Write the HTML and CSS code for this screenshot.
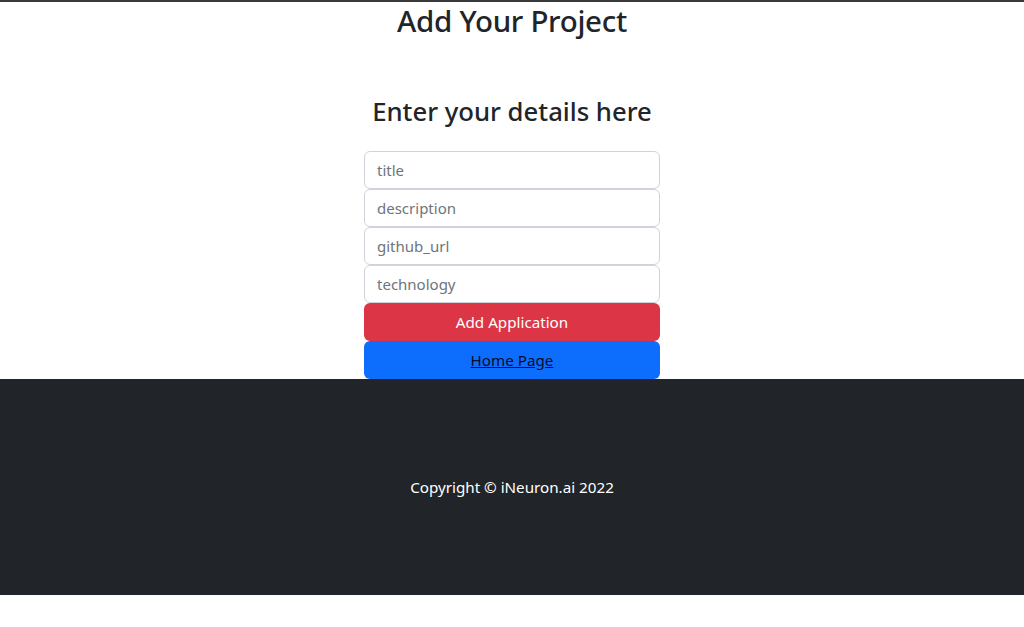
FILE: index.html
```html
<!DOCTYPE html>
<html lang="en">
<head>
<meta charset="utf-8">
<title>Add Your Project</title>
<link rel="stylesheet" href="styles.css">
</head>
<body>
<header class="topbar">
  <h1 class="page-title">Add Your Project</h1>
</header>
<main class="content">
  <h2 class="form-title">Enter your details here</h2>
  <form class="project-form">
    <input class="field" type="text" placeholder="title">
    <input class="field" type="text" placeholder="description">
    <input class="field" type="text" placeholder="github_url">
    <input class="field" type="text" placeholder="technology">
    <button class="btn btn-danger" type="button">Add Application</button>
    <div class="btn btn-primary"><a class="home-link" href="#">Home Page</a></div>
  </form>
</main>
<footer class="footer">
  <p class="copyright">Copyright © iNeuron.ai 2022</p>
</footer>
</body>
</html>
```
FILE: styles.css
```css
* { box-sizing: border-box; }
html, body { margin: 0; padding: 0; background: #fff; }
body {
  font-family: "Noto Sans", "Open Sans", sans-serif;
  color: #212529;
  border-top: 2px solid #3a3a3a;
}
.topbar { text-align: center; }
.page-title {
  margin: 0;
  font-size: 29.5px;
  font-weight: 500;
  line-height: 38px;
  letter-spacing: -0.3px;
}
.content {
  display: flex;
  flex-direction: column;
  align-items: center;
  padding-top: 55px;
}
.form-title {
  margin: 0 0 22px;
  font-size: 25.7px;
  font-weight: 500;
  line-height: 34px;
}
.project-form {
  width: 296px;
  display: flex;
  flex-direction: column;
}
.field {
  height: 38px;
  width: 100%;
  border: 1px solid #ced4da;
  border-radius: 6px;
  padding: 0 12px;
  font-family: inherit;
  font-size: 15px;
  color: #212529;
  background: #fff;
}
.field::placeholder { color: #6c757d; }
.btn {
  height: 38px;
  width: 100%;
  border: none;
  border-radius: 6px;
  font-family: inherit;
  font-size: 15.2px;
  display: flex;
  align-items: center;
  justify-content: center;
}
.btn-danger { background: #dc3545; color: #fff; }
.btn-primary { background: #0d6efd; }
.home-link { color: #0b0b2a; text-decoration: underline; }
.footer {
  height: 216px;
  background: #212529;
  display: flex;
  align-items: center;
  justify-content: center;
}
.copyright {
  margin: 0;
  color: #fff;
  font-size: 15.2px;
}
```
